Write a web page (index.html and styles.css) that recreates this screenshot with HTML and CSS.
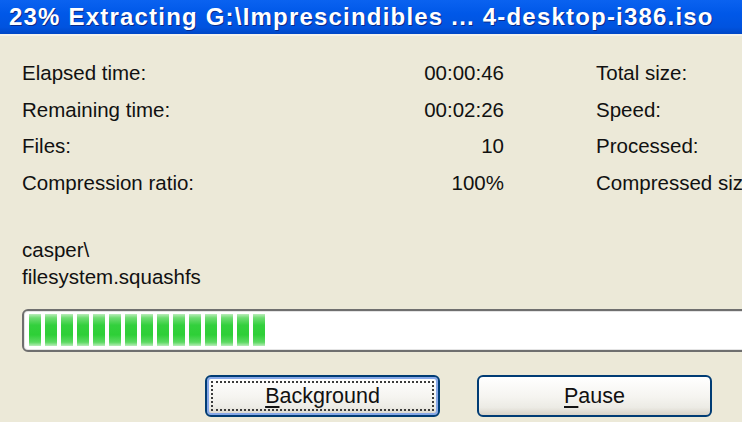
FILE: index.html
```html
<!DOCTYPE html>
<html>
<head>
<meta charset="utf-8">
<link rel="stylesheet" href="styles.css">
</head>
<body>
<div class="window">
  <div class="titlebar"><span class="title">23% Extracting G:\Imprescindibles ... 4-desktop-i386.iso</span></div>
  <div class="content">
    <div class="stats">
      <div class="lbl">Elapsed time:</div><div class="val">00:00:46</div><div class="lbl2">Total size:</div>
      <div class="lbl">Remaining time:</div><div class="val">00:02:26</div><div class="lbl2">Speed:</div>
      <div class="lbl">Files:</div><div class="val">10</div><div class="lbl2">Processed:</div>
      <div class="lbl">Compression ratio:</div><div class="val">100%</div><div class="lbl2">Compressed size:</div>
    </div>
    <div class="file">
      <div>casper\</div>
      <div>filesystem.squashfs</div>
    </div>
    <div class="progress">
      <span class="blk"></span><span class="blk"></span><span class="blk"></span><span class="blk"></span><span class="blk"></span>
      <span class="blk"></span><span class="blk"></span><span class="blk"></span><span class="blk"></span><span class="blk"></span>
      <span class="blk"></span><span class="blk"></span><span class="blk"></span><span class="blk"></span><span class="blk"></span>
    </div>
    <div class="buttons">
      <button class="btn focus"><span class="focusrect"><u>B</u>ackground</span></button>
      <button class="btn"><span class="focusrect nofocus"><u>P</u>ause</span></button>
    </div>
  </div>
</div>
</body>
</html>
```

FILE: styles.css
```css
html, body {
  margin: 0;
  padding: 0;
  width: 742px;
  height: 422px;
  overflow: hidden;
  background: #ECE9D8;
}

.window {
  width: 742px;
  height: 422px;
  overflow: hidden;
  font-family: "Liberation Sans", Arial, sans-serif;
  font-size: 20.5px;
  color: #111;
}

.titlebar {
  height: 34px;
  background: linear-gradient(to bottom, #0a62f0 0%, #0058e8 40%, #0053df 80%, #0047c6 100%);
  border-bottom: 2px solid #f4f2ea;
  display: flex;
  align-items: center;
  padding-left: 9px;
  white-space: nowrap;
  overflow: hidden;
}

.title {
  font-family: "Liberation Sans", Arial, sans-serif;
  font-weight: bold;
  font-size: 24px;
  color: #fff;
  text-shadow: 1px 1px 0 #0a2a8a;
  letter-spacing: 1.2px;
}

.content {
  padding: 19px 0 0 22px;
}

.stats {
  display: grid;
  grid-template-columns: 208px 182px 1fr;
  column-gap: 92px;
  grid-auto-rows: 36.5px;
  align-items: center;
  white-space: nowrap;
}

.val {
  text-align: right;
}

.file {
  margin-top: 35px;
  line-height: 27px;
}

.progress {
  margin-top: 19px;
  width: 740px;
  height: 32px;
  border: 2px solid #6f6f6f;
  border-radius: 6px;
  background: #fff;
  box-shadow: inset 0 0 0 1px #e4e4e4;
  padding: 3px 0 4px 5px;
  display: flex;
  gap: 4px;
}

.blk {
  width: 12px;
  height: 32px;
  background: linear-gradient(to bottom, #b9edba 0%, #6fdc73 12%, #33d03d 35%, #2ecf37 65%, #5cd962 88%, #b8edb9 100%);
}

.buttons {
  margin-top: 23px;
  padding-left: 183px;
  display: flex;
  gap: 37px;
}

.btn {
  width: 235px;
  height: 42px;
  padding: 4px;
  border: 2px solid #003c74;
  border-radius: 6px;
  background: linear-gradient(to bottom, #ffffff 0%, #f6f5f1 50%, #ecebe5 80%, #d8d3c8 100%);
  font-family: "Liberation Sans", Arial, sans-serif;
  font-size: 21.5px;
  color: #111;
  display: flex;
}

.btn.focus {
  box-shadow: inset 0 0 0 2px #87a8e8;
}

.focusrect {
  flex: 1;
  display: flex;
  align-items: center;
  justify-content: center;
  border: 2px dotted #3c3c3c;
}

.focusrect.nofocus {
  border-color: transparent;
}

u {
  text-decoration-thickness: 2px;
  text-underline-offset: 3px;
}
```
